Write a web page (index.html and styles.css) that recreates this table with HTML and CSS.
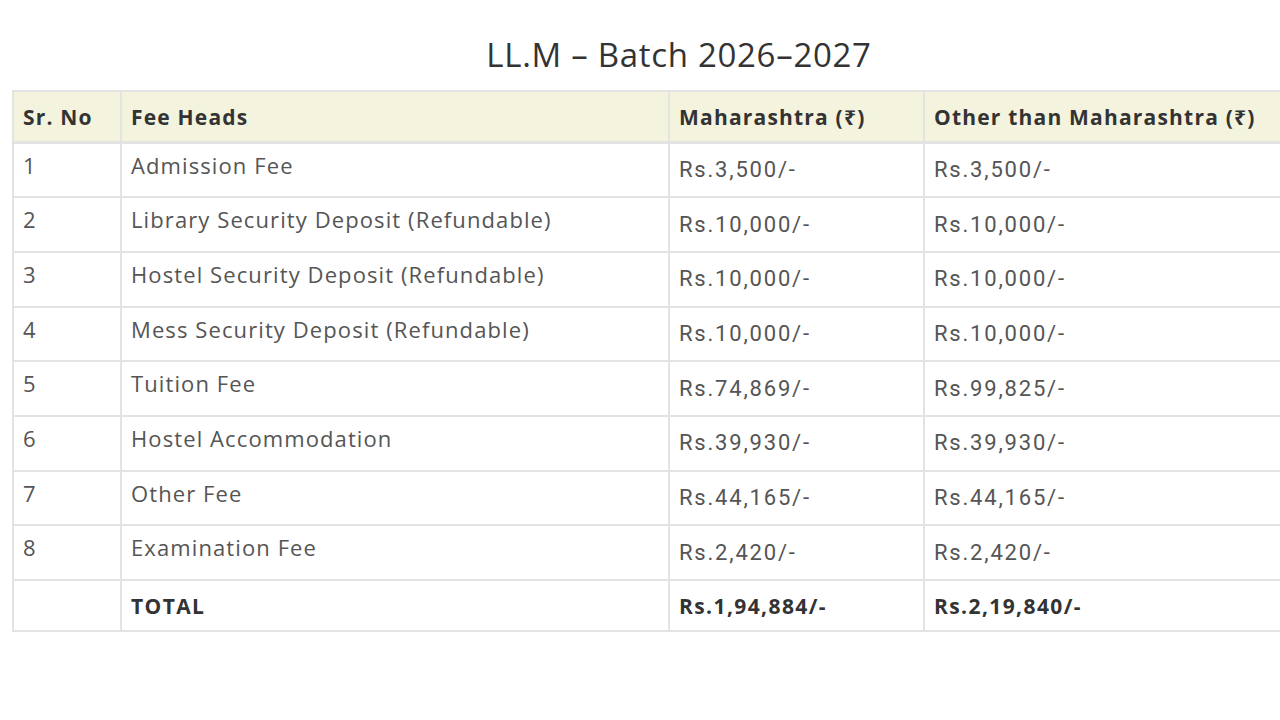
FILE: index.html
```html
<!DOCTYPE html>
<html>
<head>
<meta charset="utf-8">
<link rel="stylesheet" href="styles.css">
</head>
<body>
<div class="page">
  <h2 class="title">LL.M – Batch 2026–2027</h2>
  <table class="fees">
    <thead>
      <tr><th class="c1">Sr. No</th><th class="c2">Fee Heads</th><th class="c3">Maharashtra (₹)</th><th class="c4">Other than Maharashtra (₹)</th></tr>
    </thead>
    <tbody>
      <tr><td>1</td><td>Admission Fee</td><td class="amt">Rs.3,500/-</td><td class="amt">Rs.3,500/-</td></tr>
      <tr><td>2</td><td>Library Security Deposit (Refundable)</td><td class="amt">Rs.10,000/-</td><td class="amt">Rs.10,000/-</td></tr>
      <tr><td>3</td><td>Hostel Security Deposit (Refundable)</td><td class="amt">Rs.10,000/-</td><td class="amt">Rs.10,000/-</td></tr>
      <tr><td>4</td><td>Mess Security Deposit (Refundable)</td><td class="amt">Rs.10,000/-</td><td class="amt">Rs.10,000/-</td></tr>
      <tr><td>5</td><td>Tuition Fee</td><td class="amt">Rs.74,869/-</td><td class="amt">Rs.99,825/-</td></tr>
      <tr><td>6</td><td>Hostel Accommodation</td><td class="amt">Rs.39,930/-</td><td class="amt">Rs.39,930/-</td></tr>
      <tr><td>7</td><td>Other Fee</td><td class="amt">Rs.44,165/-</td><td class="amt">Rs.44,165/-</td></tr>
      <tr><td>8</td><td>Examination Fee</td><td class="amt">Rs.2,420/-</td><td class="amt">Rs.2,420/-</td></tr>
      <tr class="total"><td></td><td>TOTAL</td><td>Rs.1,94,884/-</td><td>Rs.2,19,840/-</td></tr>
    </tbody>
  </table>
</div>
</body>
</html>
```
FILE: styles.css
```css
html, body {
  margin: 0;
  padding: 0;
  background: #fff;
  overflow: hidden;
}
body {
  font-family: "Open Sans", "Noto Sans", sans-serif;
  color: #555;
}
.page {
  width: 1334px;
  margin-left: 12px;
  padding-top: 34px;
}
.title {
  margin: 0 0 14px 0;
  text-align: center;
  font-weight: 400;
  font-size: 33px;
  line-height: 42px;
  color: #333;
  letter-spacing: 0.7px;
}
.fees {
  width: 1334px;
  border-collapse: collapse;
  table-layout: fixed;
  border: 2px solid #e3e3e3;
}
.fees th, .fees td {
  border: 2px solid #e3e3e3;
  text-align: left;
  padding: 0 9px;
}
.fees th {
  background: #f4f3de;
  color: #333;
  font-weight: 700;
  font-size: 21px;
  height: 49px;
  border-bottom-width: 3px;
  letter-spacing: 1.2px;
}
.c1 { width: 108px; box-sizing: border-box; }
.c2 { width: 548px; box-sizing: border-box; }
.c3 { width: 255px; box-sizing: border-box; }
.fees td {
  height: 54.7px;
  font-size: 22px;
  line-height: 30px;
  vertical-align: top;
  padding-top: 6px;
  padding-bottom: 0;
  box-sizing: border-box;
  letter-spacing: 1.1px;
}
.fees td.amt {
  font-family: Roboto, "Liberation Sans", sans-serif;
  font-size: 22px;
  vertical-align: middle;
  padding-top: 0;
  letter-spacing: 1.8px;
}
.fees tr.total td {
  height: 51px;
  font-weight: 700;
  color: #333;
  vertical-align: middle;
  padding-top: 0;
  font-size: 21px;
  letter-spacing: 1.4px;
}
```
